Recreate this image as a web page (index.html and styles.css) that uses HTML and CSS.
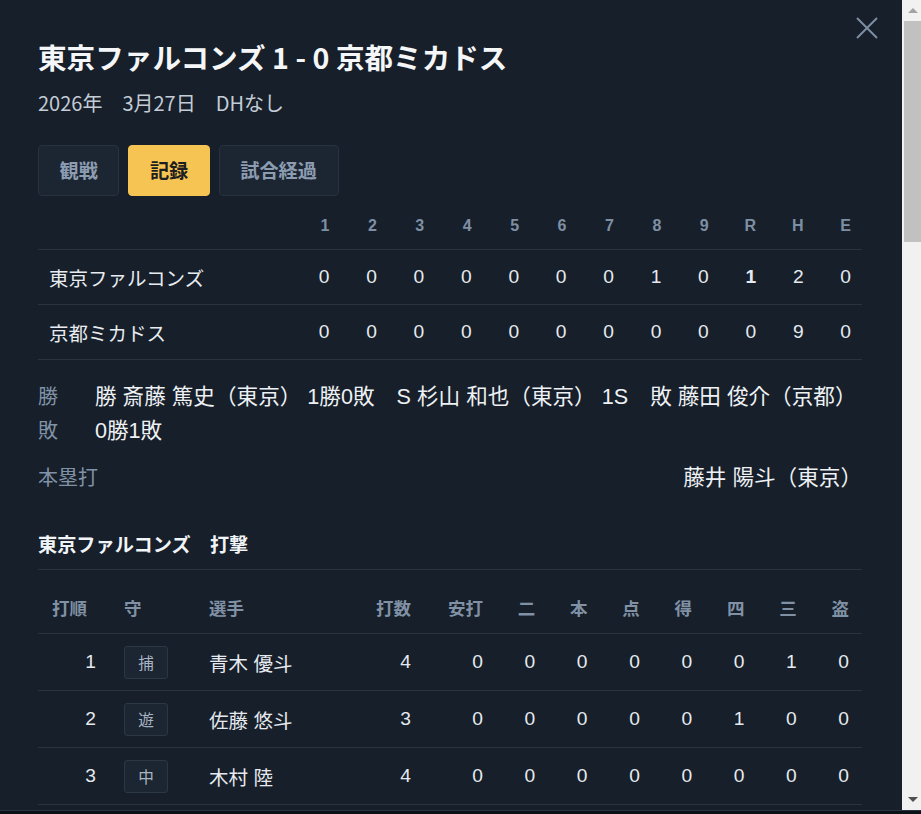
FILE: index.html
```html
<!DOCTYPE html>
<html lang="ja">
<head>
<meta charset="utf-8">
<title>東京ファルコンズ 1 - 0 京都ミカドス</title>
<link rel="stylesheet" href="styles.css">
</head>
<body>
<div class="frame">
<div class="modal">
  <button class="close" aria-label="閉じる">
    <svg width="24" height="24" viewBox="0 0 24 24"><path d="M2 2 L22 22 M22 2 L2 22" stroke="currentColor" stroke-width="2" fill="none"/></svg>
  </button>
  <div class="content">
    <h1 class="title">東京ファルコンズ 1 - 0 京都ミカドス</h1>
    <div class="meta">2026年　3月27日　DHなし</div>
    <div class="tabs">
      <button class="tab">観戦</button>
      <button class="tab active">記録</button>
      <button class="tab">試合経過</button>
    </div>

    <div class="score">
      <div class="srow shead">
        <div class="steam"></div>
        <div>1</div><div>2</div><div>3</div><div>4</div><div>5</div><div>6</div><div>7</div><div>8</div><div>9</div><div>R</div><div>H</div><div>E</div>
      </div>
      <div class="srow">
        <div class="steam">東京ファルコンズ</div>
        <div>0</div><div>0</div><div>0</div><div>0</div><div>0</div><div>0</div><div>0</div><div>1</div><div>0</div><div class="runs">1</div><div>2</div><div>0</div>
      </div>
      <div class="srow">
        <div class="steam">京都ミカドス</div>
        <div>0</div><div>0</div><div>0</div><div>0</div><div>0</div><div>0</div><div>0</div><div>0</div><div>0</div><div>0</div><div>9</div><div>0</div>
      </div>
    </div>

    <div class="results">
      <div class="rrow">
        <div class="rlabel narrow">勝敗</div>
        <div class="rvalue"><span class="rec">勝 斎藤 篤史（東京） <span class="nw">1勝0敗</span></span><span class="rec">S 杉山 和也（東京） <span class="nw">1S</span></span><span class="rec">敗 藤田 俊介（京都） <span class="nw">0勝1敗</span></span></div>
      </div>
      <div class="rrow">
        <div class="rlabel">本塁打</div>
        <div class="rvalue">藤井 陽斗（東京）</div>
      </div>
    </div>

    <section class="block">
      <h2 class="bhead">東京ファルコンズ　打撃</h2>
      <div class="bat">
        <div class="brow bh"><div class="c-order">打順</div><div class="c-pos">守</div><div class="c-name">選手</div><div class="c-num">打数</div><div class="c-num">安打</div><div class="c-num">二</div><div class="c-num">本</div><div class="c-num">点</div><div class="c-num">得</div><div class="c-num">四</div><div class="c-num">三</div><div class="c-num">盗</div></div>
        <div class="brow"><div class="c-order n">1</div><div class="c-pos"><span class="pos">捕</span></div><div class="c-name">青木 優斗</div><div class="c-num">4</div><div class="c-num">0</div><div class="c-num">0</div><div class="c-num">0</div><div class="c-num">0</div><div class="c-num">0</div><div class="c-num">0</div><div class="c-num">1</div><div class="c-num">0</div></div>
        <div class="brow"><div class="c-order n">2</div><div class="c-pos"><span class="pos">遊</span></div><div class="c-name">佐藤 悠斗</div><div class="c-num">3</div><div class="c-num">0</div><div class="c-num">0</div><div class="c-num">0</div><div class="c-num">0</div><div class="c-num">0</div><div class="c-num">1</div><div class="c-num">0</div><div class="c-num">0</div></div>
        <div class="brow"><div class="c-order n">3</div><div class="c-pos"><span class="pos">中</span></div><div class="c-name">木村 陸</div><div class="c-num">4</div><div class="c-num">0</div><div class="c-num">0</div><div class="c-num">0</div><div class="c-num">0</div><div class="c-num">0</div><div class="c-num">0</div><div class="c-num">0</div><div class="c-num">0</div></div>
      </div>
    </section>
  </div>
</div>
<div class="vscroll" aria-hidden="true">
  <div class="sb-btn"><span class="sb-up"></span></div>
  <div class="sb-thumb"></div>
  <div class="sb-track"></div>
  <div class="sb-btn"><span class="sb-down"></span></div>
</div>
</div>
</body>
</html>
```

FILE: styles.css
```css
* { box-sizing: border-box; }

html, body {
  margin: 0;
  padding: 0;
  background: #0c1117;
  height: 100%;
  overflow: hidden;
}

body {
  font-family: "Liberation Sans", "Noto Sans CJK JP", sans-serif;
  color: #e6eaef;
}

.frame {
  display: flex;
  height: 811px;
  border-bottom: 1px solid #2a3441;
}

.modal {
  position: relative;
  flex: 1;
  min-width: 0;
  overflow: hidden;
  background: #161f2a;
}

/* drawn scrollbar */
.vscroll {
  flex: none;
  width: 19px;
  display: flex;
  flex-direction: column;
  background: #f1f1f1;
}
.sb-btn {
  height: 21px;
  display: flex;
  align-items: center;
  justify-content: center;
  padding-left: 3px;
}
.sb-up, .sb-down {
  width: 0;
  height: 0;
  border-left: 5px solid transparent;
  border-right: 5px solid transparent;
}
.sb-up { border-bottom: 5px solid #a3a3a3; }
.sb-down { border-top: 5px solid #505050; }
.sb-thumb {
  height: 221px;
  margin-left: 2px;
  background: #c1c1c1;
}
.sb-track { flex: 1; }

.content {
  padding: 38px 40px 0 38px;
}

.close {
  position: absolute;
  top: 16px;
  right: 23px;
  width: 24px;
  height: 24px;
  padding: 0;
  border: 0;
  background: none;
  color: #7d8ea3;
  cursor: pointer;
}
.close svg { display: block; }

.title {
  margin: 0;
  font-family: "Noto Sans CJK JP", sans-serif;
  font-size: 28.6px;
  line-height: 1.3;
  font-weight: 700;
  color: #f4f6f8;
}

.meta {
  margin-top: 13px;
  font-family: "Noto Sans CJK JP", sans-serif;
  font-size: 20px;
  line-height: 30px;
  color: #c4ccd6;
}

.tabs {
  display: flex;
  gap: 9px;
  margin-top: 27px;
}

.tab {
  font-family: "Noto Sans CJK JP", sans-serif;
  font-size: 19.2px;
  font-weight: 700;
  line-height: 29px;
  height: 51px;
  padding: 0 20.5px;
  border: 1px solid #28323f;
  border-radius: 4px;
  background: #1c2633;
  color: #8d9db1;
}
.tab.active {
  background: #f6c453;
  border-color: #f6c453;
  color: #1d1e20;
}

/* scoreboard */
.srow {
  display: grid;
  grid-template-columns: 255px repeat(12, 1fr);
  align-items: center;
  height: 55px;
  border-bottom: 1px solid #2a3441;
  font-size: 19.2px;
}
.srow > div {
  text-align: right;
  padding-right: 11px;
}
.srow .steam {
  text-align: left;
  padding-left: 11px;
  font-size: 19.5px;
  color: #e8ecf0;
}
.shead {
  height: 54px;
  padding-top: 6px;
  font-size: 16px;
  font-weight: 700;
  color: #7f8fa3;
}
.runs { font-weight: 700; }

/* results */
.results {
  margin-top: 20px;
}
.rrow {
  display: flex;
  justify-content: space-between;
  gap: 37px;
  line-height: 34px;
}
.rrow + .rrow { margin-top: 13px; }
.rlabel {
  flex: none;
  font-size: 20px;
  color: #8192a6;
}
.rlabel.narrow { width: 1em; }
.rvalue {
  font-size: 21.6px;
  color: #eef1f4;
}
.rec { margin-right: 22px; }
.rec:last-child { margin-right: 0; }
.nw { white-space: nowrap; }

/* batting */
.block { margin-top: 32px; }
.bhead {
  margin: 0;
  padding-bottom: 8px;
  border-bottom: 1px solid #2a3441;
  font-family: "Noto Sans CJK JP", sans-serif;
  font-size: 19.2px;
  line-height: 34px;
  font-weight: 700;
  color: #f1f4f7;
}

.bat { margin-top: 11px; }

.brow {
  display: grid;
  grid-template-columns: 72px 86px 1fr 72px 72px repeat(7, 52.3px);
  align-items: center;
  height: 57px;
  border-bottom: 1px solid #2a3441;
  font-size: 19.2px;
}
.brow.bh {
  height: 53px;
  font-family: "Noto Sans CJK JP", sans-serif;
  font-size: 17.5px;
  font-weight: 700;
  color: #8191a5;
}

.c-order { padding-left: 14px; }
.c-order.n { text-align: right; padding: 0 14px 0 0; }
.c-pos { padding-left: 14px; display: flex; }
.c-name { padding-left: 13px; font-size: 19.5px; white-space: nowrap; }
.bh .c-name { font-size: 17.5px; }
.c-num { text-align: right; padding-right: 13px; }

.pos {
  display: inline-flex;
  align-items: center;
  justify-content: center;
  width: 44px;
  height: 33px;
  border: 1px solid #2c3746;
  border-radius: 3px;
  background: #1c2532;
  font-size: 15.6px;
  color: #aab5c3;
}
```
